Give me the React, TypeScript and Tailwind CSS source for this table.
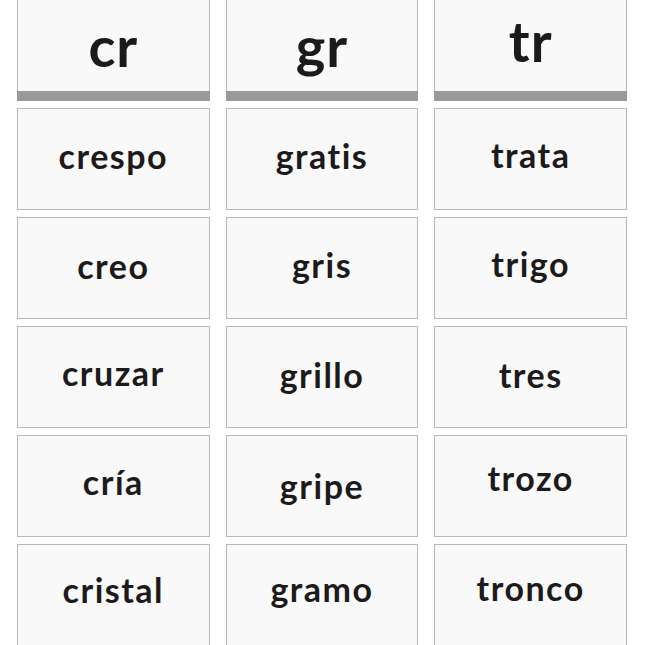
import React from "react";

const headers: [string, string][] = [
  ["cr", "mt-[2px]"],
  ["gr", "mt-[2px]"],
  ["tr", "-mt-[8px]"],
];

const rows: [string, string][][] = [
  [["crespo", "-mt-[6px]"], ["gratis", "-mt-[6px]"], ["trata", "-mt-[8px]"]],
  [["creo", "-mt-[4px]"], ["gris", "-mt-[6px]"], ["trigo", "-mt-[8px]"]],
  [["cruzar", "-mt-[8px]"], ["grillo", "-mt-[4px]"], ["tres", "-mt-[4px]"]],
  [["cría", "-mt-[8px]"], ["gripe", "mt-[0px]"], ["trozo", "-mt-[16px]"]],
  [["cristal", "-mt-[10px]"], ["gramo", "-mt-[12px]"], ["tronco", "-mt-[14px]"]],
];

export default function App() {
  return (
    <div
      className="w-[645px] h-[645px] overflow-hidden bg-white"
      style={{ fontFamily: 'Lato, "Noto Sans", sans-serif' }}
    >
      <div className="ml-[17px] w-[610px] -mt-[2px] grid grid-cols-3 gap-x-[16px]">
        {headers.map(([h, off]) => (
          <div key={h} className="flex flex-col">
            <div className="h-[93px] bg-[#f9f9f9] border border-[#b9b9b9] border-b-0 flex items-center justify-center">
              <span
                className={`text-[56px] font-bold text-[#1c1a1b] leading-none tracking-[1px] ${off}`}
              >
                {h}
              </span>
            </div>
            <div className="h-[10px] bg-[#999999]" />
          </div>
        ))}
      </div>
      <div className="ml-[17px] w-[610px] mt-[7px] grid grid-cols-3 gap-x-[16px] gap-y-[7px]">
        {rows.flat().map(([w, off], i) => (
          <div
            key={i}
            className="h-[102px] bg-[#f9f9f9] border border-[#b9b9b9] flex items-center justify-center"
          >
            <span
              className={`text-[34px] font-bold text-[#1c1a1b] leading-none tracking-[1.5px] ${off}`}
            >
              {w}
            </span>
          </div>
        ))}
      </div>
    </div>
  );
}
